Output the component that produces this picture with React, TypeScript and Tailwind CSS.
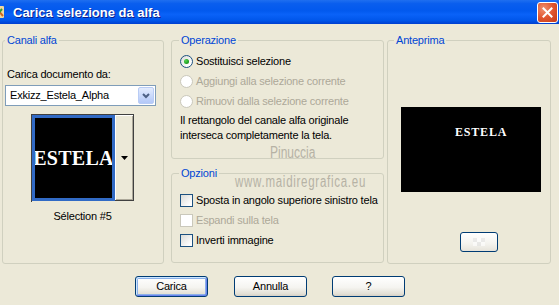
import React from "react";

function Radio({ checked, disabled }: { checked?: boolean; disabled?: boolean }) {
  return (
    <span
      className={
        "relative inline-flex h-[13px] w-[13px] shrink-0 items-center justify-center rounded-full border " +
        (disabled
          ? "border-[#CAC8BB] bg-white"
          : "border-[#1C5180] bg-[linear-gradient(135deg,#DCDCD7_0%,#FFFFFF_80%)]")
      }
    >
      {checked && (
        <span className="h-[5px] w-[5px] rounded-full bg-[radial-gradient(circle_at_35%_35%,#55D551_0%,#21A121_60%,#1A7A1A_100%)]" />
      )}
    </span>
  );
}

function Check({ disabled }: { disabled?: boolean }) {
  return (
    <span
      className={
        "inline-block h-[13px] w-[13px] shrink-0 border " +
        (disabled
          ? "border-[#CAC8BB] bg-white"
          : "border-[#1C5180] bg-[linear-gradient(135deg,#DCDCD7_0%,#FFFFFF_85%)]")
      }
    />
  );
}

function XPButton({ label, isDefault }: { label: string; isDefault?: boolean }) {
  return (
    <div
      className={
        "flex h-[21px] w-[73px] items-center justify-center rounded-[3px] border border-[#003C74] bg-[linear-gradient(180deg,#FFFFFF_0%,#F5F4F0_55%,#E3E0D6_88%,#D6D0C5_100%)] text-black " +
        (isDefault
          ? "shadow-[inset_1px_1px_0_#CEE7FF,inset_-1px_-1px_0_#6982EE,inset_0_0_0_2px_#8BB0E8]"
          : "")
      }
    >
      {label}
    </div>
  );
}

export default function App() {
  return (
    <div className="relative flex h-[305px] w-[559px] flex-col overflow-hidden whitespace-nowrap bg-[#ECE9D8] font-['Liberation_Sans',Arial,sans-serif] text-[11px] leading-[13px] tracking-[-0.2px] text-black">
      {/* Title bar */}
      <div className="flex h-[24px] shrink-0 items-center bg-[linear-gradient(180deg,#1F6FF0_0%,#0A5EEE_15%,#0259EE_45%,#0A62F8_60%,#0056EA_85%,#003FCF_100%)]">
        <svg width="12" height="16" viewBox="0 0 12 16" className="ml-[-6px] shrink-0">
          <rect x="1" y="2" width="9" height="12" rx="1" fill="#F2D9A0" />
          <path d="M2 4 L9 12" stroke="#D2691E" strokeWidth="2" />
          <path d="M3 11 L8 5" stroke="#3A9A3A" strokeWidth="2" />
        </svg>
        <span className="ml-[7px] font-['Liberation_Sans',Arial,sans-serif] text-[13px] font-bold tracking-normal text-white [text-shadow:1px_1px_0_#0A1E8C]">
          Carica selezione da alfa
        </span>
        <div className="ml-auto mr-[1px] flex h-[21px] w-[21px] items-center justify-center rounded-[3px] border border-white bg-[radial-gradient(circle_at_30%_30%,#F09070_0%,#E0552F_50%,#C43A18_100%)]">
          <svg width="11" height="11" viewBox="0 0 11 11">
            <path d="M1.5 1.5 L9.5 9.5 M9.5 1.5 L1.5 9.5" stroke="white" strokeWidth="2" strokeLinecap="square" />
          </svg>
        </div>
      </div>

      {/* Main row */}
      <div className="mt-[10px] flex pl-[2px]">
        {/* Canali alfa */}
        <fieldset className="flex h-[230px] w-[162px] flex-col rounded-[3px] border border-[#D0D0BF]">
          <legend className="ml-[2px] px-[2px] leading-[13px] text-[#0046D5]">Canali alfa</legend>
          <div className="mt-[21px] pl-[4px]">Carica documento da:</div>
          <div className="ml-[2px] mt-[4px] flex h-[21px] w-[151px] items-center border border-[#7F9DB9] bg-white">
            <span className="pl-[4px]">Exkizz_Estela_Alpha</span>
            <div className="ml-auto mr-[1px] flex h-[17px] w-[16px] items-center justify-center rounded-[2px] border border-[#B9CCF5] bg-[linear-gradient(180deg,#E3ECFE_0%,#C6D6FA_60%,#B3C8F8_100%)]">
              <svg width="8" height="6" viewBox="0 0 8 6">
                <path d="M1 1 L4 4 L7 1" stroke="#4D6185" strokeWidth="2" fill="none" />
              </svg>
            </div>
          </div>
          <div className="ml-[28px] mt-[8px] flex h-[88px] w-[103px] border-l border-t border-[#404040]">
            <div className="flex h-[86px] w-[83px] items-center justify-center overflow-hidden border-[3px] border-[#316AC5] bg-black">
              <span className="block font-['Liberation_Serif',serif] text-[20px] font-bold leading-[20px] tracking-[0.3px] text-white">
                ESTELA
              </span>
            </div>
            <div className="flex h-[86px] w-[19px] items-center justify-center border-b border-r border-[#404040] bg-[#ECE9D8] shadow-[inset_1px_1px_0_#FFFFFF,inset_-1px_-1px_0_#ACA899]">
              <svg width="7" height="4" viewBox="0 0 7 4">
                <path d="M0 0 L7 0 L3.5 4 Z" fill="black" />
              </svg>
            </div>
          </div>
          <div className="ml-[28px] mt-[8px] w-[103px] text-center">Sélection #5</div>
        </fieldset>

        {/* Middle column */}
        <div className="ml-[7px] flex w-[213px] flex-col">
          <fieldset className="flex h-[125px] flex-col rounded-[3px] border border-[#D0D0BF]">
            <legend className="ml-[7px] px-[2px] leading-[13px] text-[#0046D5]">Operazione</legend>
            <div className="mt-[4px] flex flex-col pl-[8px]">
              <div className="flex h-[20px] items-center gap-[3px]">
                <Radio checked />
                <span>Sostituisci selezione</span>
              </div>
              <div className="flex h-[20px] items-center gap-[3px] text-[#ACA899]">
                <Radio disabled />
                <span>Aggiungi alla selezione corrente</span>
              </div>
              <div className="flex h-[20px] items-center gap-[3px] text-[#ACA899]">
                <Radio disabled />
                <span>Rimuovi dalla selezione corrente</span>
              </div>
            </div>
            <div className="mt-[2px] pl-[8px] leading-[15px]">
              Il rettangolo del canale alfa originale
              <br />
              interseca completamente la tela.
            </div>
          </fieldset>
          <fieldset className="mt-[8px] flex h-[96px] flex-col rounded-[3px] border border-[#D0D0BF]">
            <legend className="ml-[7px] px-[2px] leading-[13px] text-[#0046D5]">Opzioni</legend>
            <div className="mt-[10px] flex flex-col pl-[8px]">
              <div className="flex h-[20px] items-center gap-[3px]">
                <Check />
                <span>Sposta in angolo superiore sinistro tela</span>
              </div>
              <div className="flex h-[20px] items-center gap-[3px] text-[#ACA899]">
                <Check disabled />
                <span>Espandi sulla tela</span>
              </div>
              <div className="flex h-[21px] items-center gap-[3px]">
                <Check />
                <span>Inverti immagine</span>
              </div>
            </div>
          </fieldset>
        </div>

        {/* Anteprima */}
        <fieldset className="ml-[3px] flex h-[230px] w-[164px] flex-col rounded-[3px] border border-[#D0D0BF]">
          <legend className="ml-[6px] px-[2px] leading-[13px] text-[#0046D5]">Anteprima</legend>
          <div className="ml-[13px] mt-[60px] flex h-[85px] w-[140px] bg-black">
            <span className="ml-[54px] mt-[19px] font-['Liberation_Serif',serif] text-[12px] font-bold leading-[12px] tracking-[0.8px] text-white">
              ESTELA
            </span>
          </div>
          <div className="ml-[72px] mt-[40px] flex h-[20px] w-[38px] items-center justify-center rounded-[3px] border border-[#003C74] bg-[linear-gradient(180deg,#FFFFFF_0%,#F4F3EE_60%,#E6E3DA_100%)]">
            <div className="grid grid-cols-3 opacity-60">
              <span className="h-[4px] w-[4px] bg-[#E2E2E2]" />
              <span className="h-[4px] w-[4px] bg-white" />
              <span className="h-[4px] w-[4px] bg-[#E2E2E2]" />
              <span className="h-[4px] w-[4px] bg-white" />
              <span className="h-[4px] w-[4px] bg-[#E2E2E2]" />
              <span className="h-[4px] w-[4px] bg-white" />
            </div>
          </div>
        </fieldset>
      </div>

      {/* Buttons */}
      <div className="mt-[12px] flex pl-[135px]">
        <XPButton label="Carica" isDefault />
        <div className="ml-[26px]">
          <XPButton label="Annulla" />
        </div>
        <div className="ml-[25px]">
          <XPButton label="?" />
        </div>
      </div>

      {/* Watermarks */}
      <span className="pointer-events-none absolute left-[270px] top-[145px] origin-left scale-x-[0.75] font-['Liberation_Sans',Arial,sans-serif] text-[16px] leading-[16px] tracking-normal text-[#A9A598] opacity-80">
        Pinuccia
      </span>
      <span className="pointer-events-none absolute left-[235px] top-[174px] origin-left scale-x-[0.72] font-['Liberation_Sans',Arial,sans-serif] text-[16px] leading-[16px] tracking-[1px] text-[#A9A598] opacity-80">
        www.maidiregrafica.eu
      </span>
    </div>
  );
}
